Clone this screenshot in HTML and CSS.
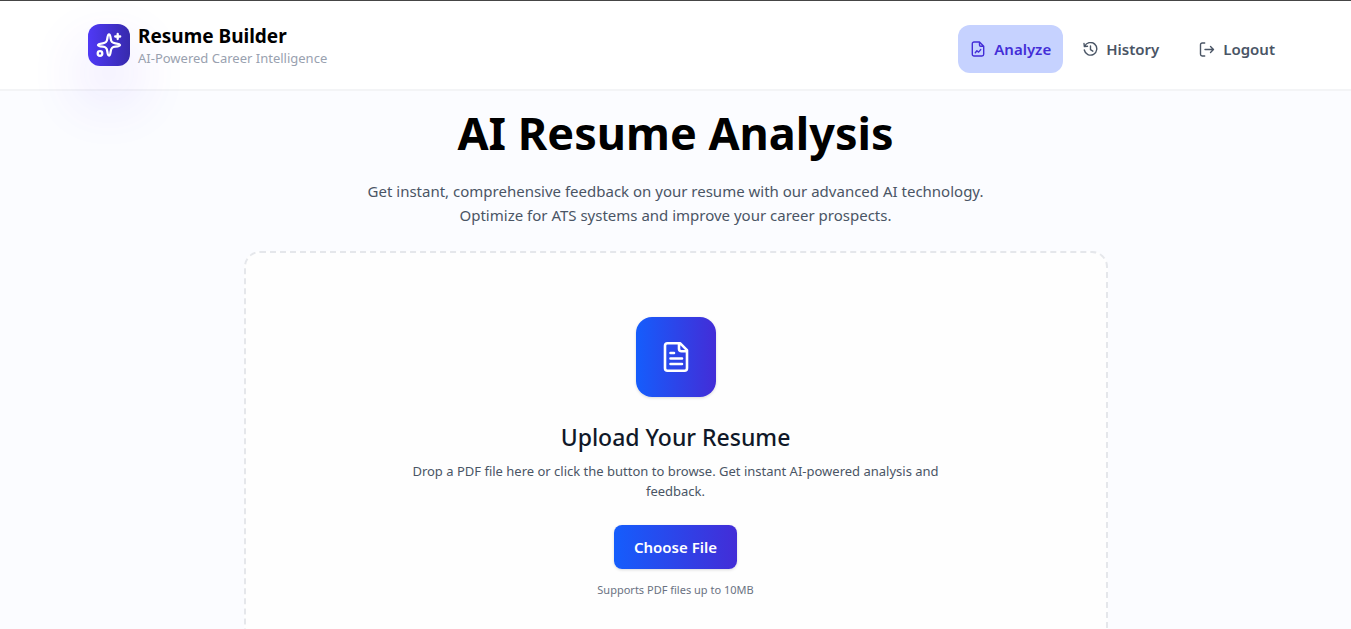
FILE: index.html
```html
<!DOCTYPE html>
<html lang="en">
<head>
<meta charset="utf-8">
<meta name="viewport" content="width=device-width, initial-scale=1">
<title>Resume Builder</title>
<link rel="stylesheet" href="styles.css">
</head>
<body>
<header class="header">
  <div class="brand">
    <div class="brand-logo">
      <svg width="28" height="28" viewBox="0 0 28 28" fill="none" stroke="currentColor" stroke-width="2.300" stroke-linecap="round" stroke-linejoin="round" aria-hidden="true">
        <path d="M14 3.500c1 0 1.300 1.200 1.700 4.200 .4 3.300 1.300 4.200 4.600 4.600 3 .4 4.700 .7 4.700 1.700s-1.700 1.300-4.700 1.700c-3.300 .4-4.200 1.300-4.600 4.600-.4 3-.7 4.200-1.700 4.200s-1.300-1.200-1.700-4.200c-.4-3.300-1.300-4.200-4.600-4.600-3-.4-4.700-.7-4.700-1.700s1.700-1.300 4.700-1.700c3.300-.4 4.200-1.300 4.600-4.600C12.700 4.700 13 3.500 14 3.500z"/>
        <path d="M22.700 3v5M20.200 5.500h5"/>
        <circle cx="5" cy="22.500" r="2.300"/>
      </svg>
    </div>
    <div>
      <p class="brand-name">Resume Builder</p>
      <p class="brand-tagline">AI-Powered Career Intelligence</p>
    </div>
  </div>
  <nav class="nav">
    <a class="nav-item nav-item-active" href="#analyze" aria-current="page">
      <svg width="16" height="16" viewBox="0 0 16 16" fill="none" stroke="currentColor" stroke-width="1.400" stroke-linecap="round" stroke-linejoin="round" aria-hidden="true">
        <path d="M9.500 1H4a1.700 1.700 0 0 0-1.700 1.700v10.600A1.700 1.700 0 0 0 4 15h8a1.700 1.700 0 0 0 1.700-1.700V5.200zM9.500 1v3a1.200 1.200 0 0 0 1.200 1.200h3M5.300 11.700l1.600-1.900 1.700 1.300 2.100-2.500"/>
      </svg>
      Analyze
    </a>
    <a class="nav-item" href="#history">
      <svg width="15" height="15" viewBox="0 0 15 15" fill="none" stroke="currentColor" stroke-width="1.400" stroke-linecap="round" stroke-linejoin="round" aria-hidden="true">
        <path d="M1.700 4.300A6.300 6.300 0 1 1 1.300 8M1 1.500l.4 3.100 3.100-.3M7.500 4v3.700l2.300 1.500"/>
      </svg>
      History
    </a>
    <button class="nav-item nav-logout" type="button">
      <svg width="16" height="15" viewBox="0 0 16 15" fill="none" stroke="currentColor" stroke-width="1.400" stroke-linecap="round" stroke-linejoin="round" aria-hidden="true">
        <path d="M5.700 1H3.200A1.700 1.700 0 0 0 1.500 2.700v9.600A1.700 1.700 0 0 0 3.200 14h2.500M6 7.500h8.500M11.500 4.500l3 3-3 3"/>
      </svg>
      Logout
    </button>
  </nav>
</header>
<main class="main">
  <h1 class="title">AI Resume Analysis</h1>
  <p class="subtitle">Get instant, comprehensive feedback on your resume with our advanced AI technology. Optimize for ATS systems and improve your career prospects.</p>
  <section class="dropzone">
    <div class="dropzone-icon">
      <svg width="32" height="32" viewBox="0 0 32 32" fill="none" stroke="currentColor" stroke-width="2.600" stroke-linecap="round" stroke-linejoin="round" aria-hidden="true">
        <path d="M20 2.200H7.500A2.500 2.500 0 0 0 5 4.700v22.500A2.500 2.500 0 0 0 7.500 29.700h17a2.500 2.500 0 0 0 2.500-2.500V9.200zM19 2.700v5a2.500 2.500 0 0 0 2.500 2.500H27M10.500 12h3.500M10.500 17.500h11.500M10.500 23h11.500"/>
      </svg>
    </div>
    <h2 class="dropzone-title">Upload Your Resume</h2>
    <p class="dropzone-text">Drop a PDF file here or click the button to browse. Get instant AI-powered analysis and feedback.</p>
    <button class="choose" type="button">Choose File</button>
    <p class="hint">Supports PDF files up to 10MB</p>
  </section>
</main>
</body>
</html>
```
FILE: styles.css
```css
* {
  box-sizing: border-box;
}

html {
  overflow-x: hidden;
  scrollbar-width: none;
}

body {
  margin: 0;
  background: #fbfcff;
  color: #000;
  font-family: "Noto Sans", "Open Sans", sans-serif;
  font-size: 15px;
  line-height: 24px;
}

h1,
h2,
p {
  margin: 0;
}

.header {
  display: flex;
  align-items: center;
  justify-content: space-between;
  padding: 16px 64px 16px 88px;
  border-top: 1px solid #454545;
  border-bottom: 2px solid #f3f4f6;
  background: #fff;
}

.brand {
  display: flex;
  align-items: center;
  gap: 8px;
}

.brand-logo {
  display: grid;
  place-items: center;
  width: 42px;
  height: 42px;
  border-radius: 12px;
  background: linear-gradient(to right, #4f39f6, #372aac);
  box-shadow: 0 28px 60px rgba(97, 50, 255, 0.2);
  color: #fff;
}

.brand-name {
  padding-top: 2px;
  font-size: 19px;
  font-weight: 700;
}

.brand-tagline {
  color: #99a1af;
  font-size: 13px;
  line-height: 20px;
}

.nav {
  display: flex;
  align-items: center;
  gap: 8px;
  padding-top: 8px;
}

.nav-item {
  display: flex;
  align-items: center;
  gap: 8px;
  padding: 12px;
  border: 0;
  border-radius: 12px;
  background: transparent;
  color: #4a5565;
  font: inherit;
  font-weight: 600;
  text-decoration: none;
}

.nav-item-active {
  background: #c6d2ff;
  color: #432dd7;
}

.nav-logout {
  margin-left: 8px;
}

.main {
  padding: 12px 16px;
  text-align: center;
}

.title {
  font-size: 45px;
  font-weight: 700;
  line-height: 60px;
}

.subtitle {
  max-width: 640px;
  margin: 16px auto 24px;
  color: #4a5565;
}

.dropzone {
  display: flex;
  flex-direction: column;
  align-items: center;
  max-width: 864px;
  margin: 0 auto;
  padding: 64px;
  border: 2px dashed #e5e7eb;
  border-radius: 16px;
  background: #fefefe;
}

.dropzone-icon {
  display: grid;
  place-items: center;
  width: 80px;
  height: 80px;
  border-radius: 16px;
  background: linear-gradient(to right, #155dfc, #432dd7);
  box-shadow: 0 1px 3px rgba(0, 0, 0, 0.15);
  color: #fff;
}

.dropzone-title {
  margin: 24px 0 8px;
  color: #101828;
  font-size: 23px;
  font-weight: 500;
  line-height: 32px;
}

.dropzone-text {
  max-width: 544px;
  color: #4a5565;
  font-size: 13px;
  line-height: 20px;
}

.choose {
  margin: 24px 0 12px;
  padding: 10px 20px;
  border: 0;
  border-radius: 8px;
  background: linear-gradient(to right, #155dfc, #432dd7);
  box-shadow: 0 1px 3px rgba(0, 0, 0, 0.15);
  color: #fff;
  font: inherit;
  font-weight: 600;
}

.hint {
  color: #6a7282;
  font-size: 11px;
  line-height: 18px;
}
```
